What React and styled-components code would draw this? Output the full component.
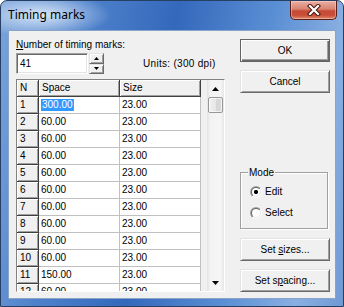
import React from "react";
import styled, { createGlobalStyle } from "styled-components";

const GlobalStyle = createGlobalStyle`
  html, body { margin: 0; padding: 0; background: #ffffff; }
  body { font-family: "Liberation Sans", Arial, sans-serif; font-size: 10px; color: #000; }
  * { box-sizing: border-box; }
`;

const Window = styled.div`
  width: 344px;
  height: 307px;
  display: flex;
  flex-direction: column;
  border: 1px solid #263f63;
  border-radius: 7px 7px 0 0;
  padding: 0 7px 7px 7px;
  background:
    radial-gradient(ellipse 70px 22px at 40px 14px, rgba(235, 244, 255, 0.85), rgba(235, 244, 255, 0) 100%),
    linear-gradient(100deg, #7aa3da 0%, #4f82cb 22%, #3468bb 45%, #5b8fd4 70%, #8ab0e2 88%, #6f99d4 100%);
  overflow: hidden;
`;

const TitleBar = styled.div`
  height: 29px;
  flex: none;
  display: flex;
  align-items: flex-start;
  justify-content: space-between;
`;

const Title = styled.div`
  font-family: "Noto Sans", "Open Sans", sans-serif;
  font-size: 12px;
  line-height: 16px;
  padding-top: 6px;
  color: #000;
`;

const CloseButton = styled.div`
  width: 47px;
  height: 19px;
  margin-right: -1px;
  border: 1px solid #5b1d17;
  border-top: none;
  border-radius: 0 0 5px 5px;
  background: linear-gradient(to bottom, #eab0a6 0%, #d8836f 45%, #c54a36 55%, #c9503a 80%, #de8b6a 100%);
  box-shadow: inset 0 0 0 1px rgba(255, 220, 210, 0.45);
  display: flex;
  align-items: center;
  justify-content: center;
`;

const Client = styled.div`
  flex: 1;
  min-height: 0;
  background: #f0f0f0;
  border: 1px solid #8aa4c8;
  padding: 7px 5px 6px 7px;
  display: flex;
  gap: 15px;
`;

const LeftColumn = styled.div`
  width: 209px;
  min-height: 0;
  display: flex;
  flex-direction: column;
`;

const Label = styled.div`
  line-height: 13px;
  height: 13px;
  u { text-decoration: underline; }
`;

const InputRow = styled.div`
  margin-top: 2px;
  height: 21px;
  flex: none;
  display: flex;
  align-items: stretch;
`;

const TextInput = styled.div`
  width: 72px;
  background: #fff;
  border-style: solid;
  border-width: 1px;
  border-color: #a0a0a0 #ffffff #ffffff #a0a0a0;
  box-shadow: inset 1px 1px 0 #696969, inset -1px -1px 0 #e3e3e3;
  padding: 3px 3px 0 3px;
  line-height: 14px;
`;

const Spin = styled.div`
  width: 15px;
  margin-left: 1px;
  display: flex;
  flex-direction: column;
`;

const SpinButton = styled.div`
  flex: 1;
  background: #f0f0f0;
  border-style: solid;
  border-width: 1px;
  border-color: #e3e3e3 #696969 #696969 #e3e3e3;
  box-shadow: inset 1px 1px 0 #fff, inset -1px -1px 0 #a0a0a0;
  display: flex;
  align-items: center;
  justify-content: center;
`;

const Units = styled.div`
  margin-left: 39px;
  padding-top: 4px;
  line-height: 13px;
  letter-spacing: 0.3px;
`;

const Grid = styled.div`
  margin-top: 5px;
  flex: 1;
  min-height: 0;
  border-style: solid;
  border-width: 1px;
  border-color: #828282 #ffffff #ffffff #828282;
  display: flex;
  overflow: hidden;
  background: #f0f0f0;
`;

const Table = styled.div`
  width: 184px;
  display: flex;
  flex-direction: column;
  overflow: hidden;
`;

const Row = styled.div`
  display: flex;
  height: 17px;
  flex: none;
`;

const HeadCell = styled.div`
  width: ${(p) => p.$w}px;
  height: 17px;
  background: #f0f0f0;
  border-right: 1px solid #404040;
  border-bottom: 1px solid #404040;
  box-shadow: inset 1px 1px 0 #ffffff, inset -1px -1px 0 #a0a0a0;
  padding-left: 3px;
  line-height: 16px;
  white-space: nowrap;
`;

const Cell = styled.div`
  width: ${(p) => p.$w}px;
  height: 17px;
  background: #fff;
  border-right: 1px solid #c0c0c0;
  border-bottom: 1px solid #c0c0c0;
  padding-left: 2px;
  line-height: 16px;
  white-space: nowrap;
`;

const Selected = styled.span`
  display: inline-block;
  background: #3399ff;
  color: #fff;
  line-height: 12px;
  margin-top: 2px;
  padding: 0 0 0 1px;
  border-right: 1px solid #e07a10;
  vertical-align: top;
`;

const GapArea = styled.div`
  flex: 1;
  background: #f0f0f0;
`;

const ScrollBar = styled.div`
  width: 17px;
  display: flex;
  flex-direction: column;
  background: linear-gradient(to right, #e3e3e3 0%, #f3f3f3 20%, #f5f5f5 80%, #e6e6e6 100%);
`;

const ArrowBox = styled.div`
  height: 17px;
  display: flex;
  align-items: center;
  justify-content: center;
  flex: none;
`;

const Thumb = styled.div`
  height: 16px;
  margin: 0 1px;
  border: 1px solid #979797;
  border-radius: 2px;
  background: linear-gradient(to right, #f2f2f2 0%, #e6e6e6 50%, #d6d6d6 51%, #dadada 100%);
  box-shadow: inset 0 0 0 1px rgba(255, 255, 255, 0.7);
  flex: none;
`;

const Track = styled.div`
  flex: 1;
`;

const RightColumn = styled.div`
  width: 90px;
  display: flex;
  flex-direction: column;
`;

const Button = styled.div`
  height: 23px;
  flex: none;
  background: #f0f0f0;
  display: flex;
  align-items: center;
  justify-content: center;
  margin-top: ${(p) => p.$mt || 0}px;
  border-style: solid;
  border-width: 1px;
  border-color: ${(p) => (p.$default ? "#646464" : "#e3e3e3 #696969 #696969 #e3e3e3")};
  box-shadow: ${(p) =>
    p.$default
      ? "inset 1px 1px 0 #ffffff, inset -1px -1px 0 #696969, inset -2px -2px 0 #a0a0a0"
      : "inset 1px 1px 0 #ffffff, inset -1px -1px 0 #a0a0a0"};
  padding-bottom: 1px;
  u { text-decoration: underline; }
`;

const Spacer = styled.div`
  flex: 1;
`;

const GroupBox = styled.div`
  position: relative;
  width: 88px;
  height: 57px;
  margin-bottom: 9px;
  border: 1px solid #a0a0a0;
  box-shadow: inset 1px 1px 0 #ffffff, 1px 1px 0 #ffffff;
  padding: 12px 0 0 9px;
  display: flex;
  flex-direction: column;
  gap: 8px;
`;

const GroupLabel = styled.span`
  position: absolute;
  top: -7px;
  left: 7px;
  padding: 0 1px;
  background: #f0f0f0;
  line-height: 13px;
`;

const RadioRow = styled.div`
  display: flex;
  align-items: center;
  height: 13px;
  gap: 1px;
`;

const RadioCircle = styled.span`
  position: relative;
  width: 12px;
  height: 12px;
  border-radius: 50%;
  background: conic-gradient(from 225deg, #a0a0a0 0deg, #a0a0a0 180deg, #ffffff 180deg, #ffffff 360deg);
  display: flex;
  align-items: center;
  justify-content: center;
  margin-right: 2px;
  &::before {
    content: "";
    width: 10px;
    height: 10px;
    border-radius: 50%;
    background: conic-gradient(from 225deg, #696969 0deg, #696969 180deg, #e3e3e3 180deg, #e3e3e3 360deg);
  }
  &::after {
    content: "";
    position: absolute;
    left: 2px;
    top: 2px;
    width: 8px;
    height: 8px;
    border-radius: 50%;
    background: ${(p) => (p.$on ? "radial-gradient(circle, #000 0 2px, #fff 2.2px)" : "#fff")};
  }
`;

const Up = () => (
  <svg width="7" height="4" viewBox="0 0 7 4"><path d="M3.5 0 L7 4 L0 4 Z" fill="#000" /></svg>
);
const Down = () => (
  <svg width="7" height="4" viewBox="0 0 7 4"><path d="M0 0 L7 0 L3.5 4 Z" fill="#000" /></svg>
);
const SmallUp = () => (
  <svg width="5" height="3" viewBox="0 0 5 3"><path d="M2.5 0 L5 3 L0 3 Z" fill="#000" /></svg>
);
const SmallDown = () => (
  <svg width="5" height="3" viewBox="0 0 5 3"><path d="M0 0 L5 0 L2.5 3 Z" fill="#000" /></svg>
);

const CloseGlyph = () => (
  <svg width="14" height="12" viewBox="0 0 14 12">
    <path d="M3 2 L11 10 M11 2 L3 10" stroke="#4a1410" strokeWidth="4.2" strokeLinecap="square" fill="none" />
    <path d="M3 2 L11 10 M11 2 L3 10" stroke="#ffffff" strokeWidth="2.2" strokeLinecap="square" fill="none" />
  </svg>
);

const rows = [
  ["1", "300.00"],
  ["2", "60.00"],
  ["3", "60.00"],
  ["4", "60.00"],
  ["5", "60.00"],
  ["6", "60.00"],
  ["7", "60.00"],
  ["8", "60.00"],
  ["9", "60.00"],
  ["10", "60.00"],
  ["11", "150.00"],
  ["12", "60.00"],
];

export default function App() {
  return (
    <>
      <GlobalStyle />
      <Window>
        <TitleBar>
          <Title>Timing marks</Title>
          <CloseButton>
            <CloseGlyph />
          </CloseButton>
        </TitleBar>
        <Client>
          <LeftColumn>
            <Label>
              <u>N</u>umber of timing marks:
            </Label>
            <InputRow>
              <TextInput>41</TextInput>
              <Spin>
                <SpinButton><SmallUp /></SpinButton>
                <SpinButton><SmallDown /></SpinButton>
              </Spin>
              <Units>Units: (300 dpi)</Units>
            </InputRow>
            <Grid>
              <Table>
                <Row>
                  <HeadCell $w={22}>N</HeadCell>
                  <HeadCell $w={81}>Space</HeadCell>
                  <HeadCell $w={81}>Size</HeadCell>
                </Row>
                {rows.map(([n, space], i) => (
                  <Row key={n}>
                    <HeadCell $w={22}>{n}</HeadCell>
                    <Cell $w={81}>{i === 0 ? <Selected>{space}</Selected> : space}</Cell>
                    <Cell $w={81}>23.00</Cell>
                  </Row>
                ))}
              </Table>
              <GapArea />
              <ScrollBar>
                <ArrowBox><Up /></ArrowBox>
                <Thumb />
                <Track />
                <ArrowBox><Down /></ArrowBox>
              </ScrollBar>
            </Grid>
          </LeftColumn>
          <RightColumn>
            <Button $default $mt={1}>OK</Button>
            <Button $mt={8}>Cancel</Button>
            <Spacer />
            <GroupBox>
              <GroupLabel>Mode</GroupLabel>
              <RadioRow>
                <RadioCircle $on />
                Edit
              </RadioRow>
              <RadioRow>
                <RadioCircle />
                Select
              </RadioRow>
            </GroupBox>
            <Button>
              Set&nbsp;<u>s</u>izes...
            </Button>
            <Button $mt={8}>
              Set s<u>p</u>acing...
            </Button>
          </RightColumn>
        </Client>
      </Window>
    </>
  );
}
